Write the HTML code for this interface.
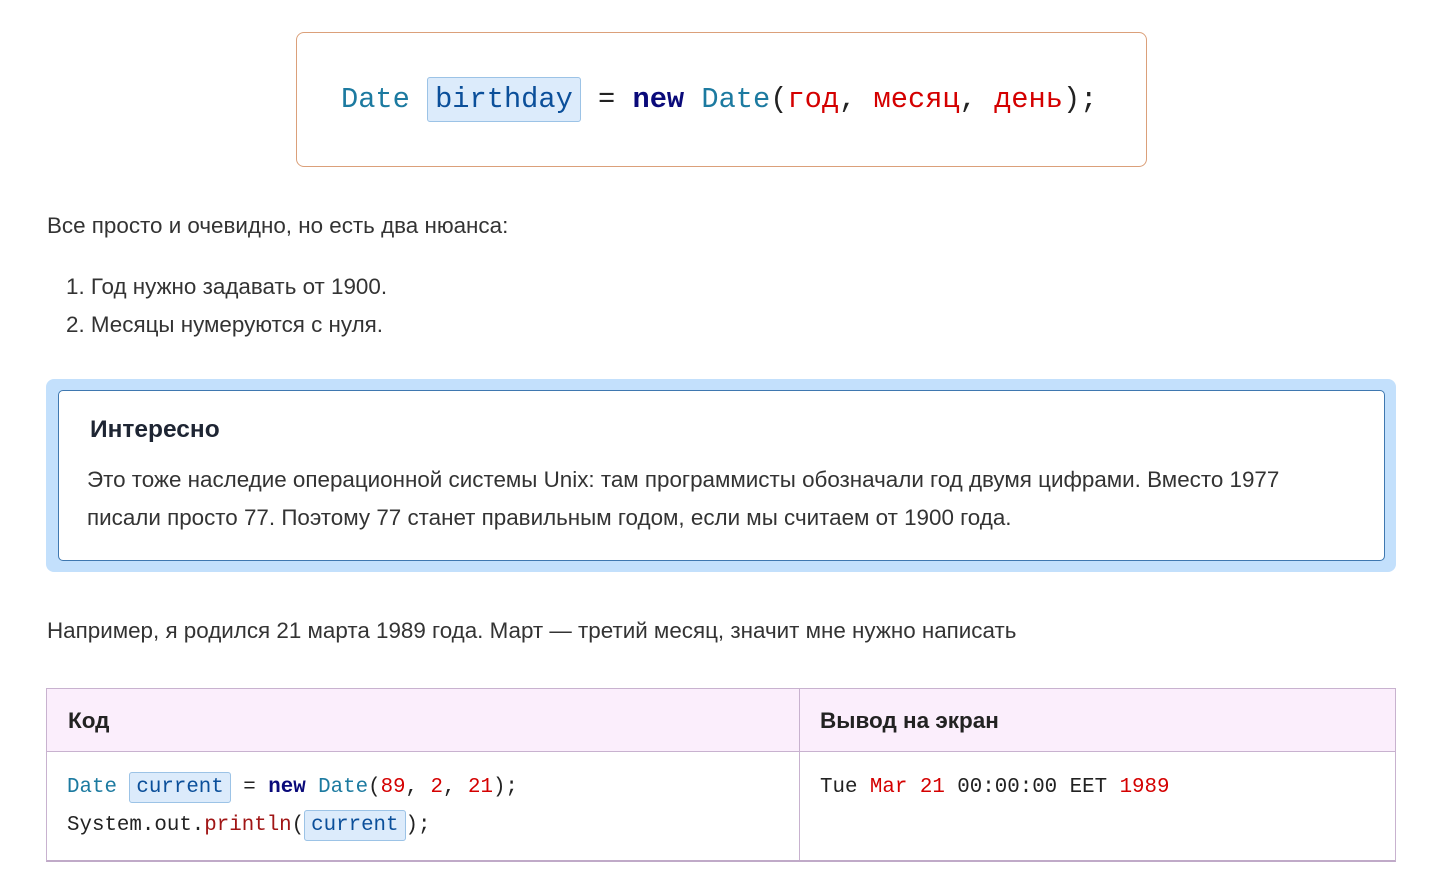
<!DOCTYPE html>
<html><head><meta charset="utf-8"><style>
body{margin:0;background:#fff;width:1455px;height:884px;overflow:hidden;font-family:"Liberation Sans",Arial,sans-serif;color:#333;position:relative}
.abs{position:absolute;white-space:nowrap}
.t{font-size:22.4px;color:#333}
.mono{font-family:"Liberation Mono","DejaVu Sans Mono",monospace}
.b{color:#1c7aa0}.nv{color:#0a0a7a;font-weight:bold}.r{color:#d40000}.dr{color:#a01515}
.hl{background:#dcebfb;border:1px solid #9cc3e6;border-radius:3px;color:#0b4f9a;padding:3px 6px}
</style></head><body>
<div class="abs" style="left:296px;top:32px;width:849px;height:133px;border:1px solid #dba07a;border-radius:8px"></div>
<div class="abs mono" style="left:341px;top:78px;font-size:28.7px;line-height:44px;color:#222">
<span class="b">Date</span> <span class="hl" style="padding:5px 7px">birthday</span> = <span class="nv">new</span> <span class="b">Date</span>(<span class="r">год</span>, <span class="r">месяц</span>, <span class="r">день</span>);</div>

<div class="abs t" style="left:47px;top:213px">Все просто и очевидно, но есть два нюанса:</div>
<div class="abs t" style="left:66px;top:274px">1. Год нужно задавать от 1900.</div>
<div class="abs t" style="left:66px;top:312px">2. Месяцы нумеруются с нуля.</div>

<div class="abs" style="left:46px;top:379px;width:1350px;height:193px;background:#c3e0fc;border-radius:8px"></div>
<div class="abs" style="left:58px;top:390px;width:1325px;height:169px;background:#fff;border:1px solid #3f78b0;border-radius:5px"></div>
<div class="abs" style="left:90px;top:416px;font-size:24.5px;font-weight:bold;color:#1e2533">Интересно</div>
<div class="abs t" style="left:87px;top:467px">Это тоже наследие операционной системы Unix: там программисты обозначали год двумя цифрами. Вместо 1977</div>
<div class="abs t" style="left:87px;top:505px">писали просто 77. Поэтому 77 станет правильным годом, если мы считаем от 1900 года.</div>

<div class="abs t" style="left:47px;top:618px">Например, я родился 21 марта 1989 года. Март — третий месяц, значит мне нужно написать</div>

<div class="abs" style="left:46px;top:688px;width:1348px;height:171px;border:1px solid #c8b2cf;border-bottom:2px solid #c0aac8"></div>
<div class="abs" style="left:47px;top:689px;width:1348px;height:62px;background:#fbeefc;border-bottom:1px solid #c8b2cf"></div>
<div class="abs" style="left:799px;top:689px;width:1px;height:171px;background:#c8b2cf"></div>
<div class="abs" style="left:68px;top:708px;font-size:22.5px;font-weight:bold;color:#222">Код</div>
<div class="abs" style="left:820px;top:708px;font-size:22.5px;font-weight:bold;color:#222">Вывод на экран</div>
<div class="abs mono" style="left:67px;top:769px;font-size:20.8px;line-height:38px;color:#222">
<span class="b">Date</span> <span class="hl">current</span> = <span class="nv">new</span> <span class="b">Date</span>(<span class="r">89</span>, <span class="r">2</span>, <span class="r">21</span>);<br>System.out.<span class="dr">println</span>(<span class="hl">current</span>);</div>
<div class="abs mono" style="left:820px;top:769px;font-size:20.8px;line-height:38px;color:#222">Tue <span class="r">Mar</span> <span class="r">21</span> 00:00:00 EET <span class="r">1989</span></div>
</body></html>
